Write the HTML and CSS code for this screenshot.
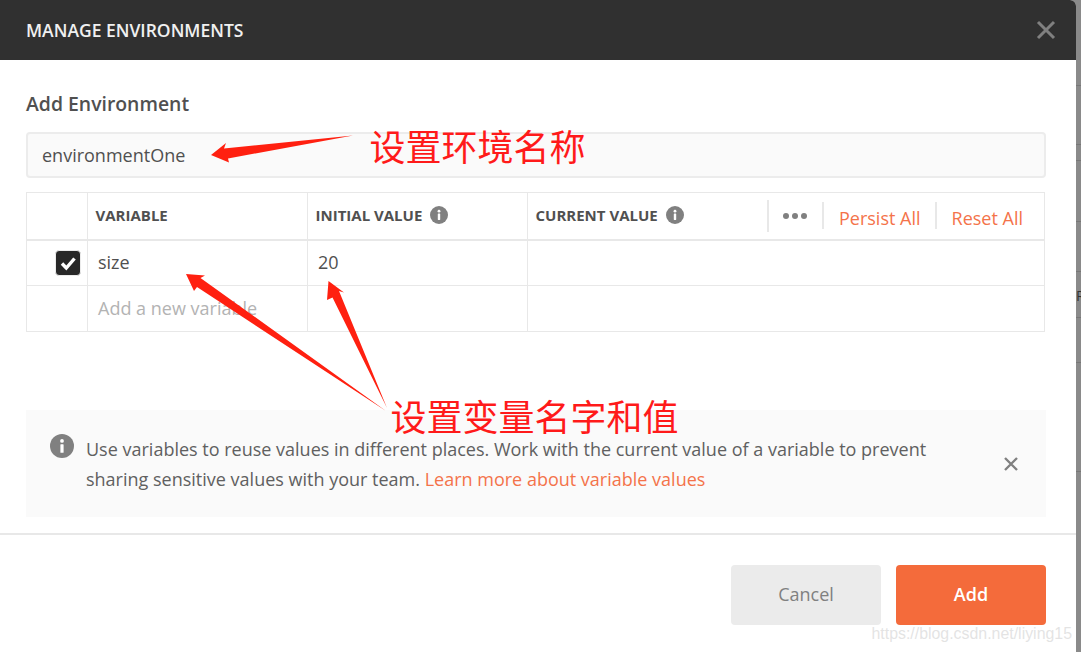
FILE: index.html
```html
<!DOCTYPE html>
<html lang="en">
<head>
    <meta charset="UTF-8">
    <meta name="viewport" content="width=device-width, initial-scale=1.0">
    <title>Manage Environments</title>
    <link rel="stylesheet" href="styles.css">
</head>

<body>
<section class="modal">
    <header class="modalHeader">
        <h1>MANAGE ENVIRONMENTS</h1>
        <svg class="closeIcon" viewBox="0 0 20 20" width="20" height="20"><path d="M2 2 L18 18 M18 2 L2 18"/></svg>
    </header>

    <div class="modalBody">
        <h2>Add Environment</h2>
        <input class="envName" type="text" value="environmentOne">

        <table class="varTable">
            <thead>
                <tr>
                    <th class="checkCol"></th>
                    <th class="varCol">VARIABLE</th>
                    <th class="valCol">
                        <span class="thLabel">INITIAL VALUE
                            <svg class="infoIcon" viewBox="0 0 18 18" width="18" height="18"><circle cx="9" cy="9" r="9"/><rect x="7.8" y="7.6" width="2.4" height="6.4" rx="0.4"/><circle class="dot" cx="9" cy="5.2" r="1.4"/></svg>
                        </span>
                    </th>
                    <th>
                        <div class="currentHead">
                            <span class="thLabel">CURRENT VALUE
                                <svg class="infoIcon" viewBox="0 0 18 18" width="18" height="18"><circle cx="9" cy="9" r="9"/><rect x="7.8" y="7.6" width="2.4" height="6.4" rx="0.4"/><circle class="dot" cx="9" cy="5.2" r="1.4"/></svg>
                            </span>
                            <div class="headActions">
                                <span class="moreDots"><i></i><i></i><i></i></span>
                                <a href="#">Persist All</a>
                                <a href="#">Reset All</a>
                            </div>
                        </div>
                    </th>
                </tr>
            </thead>
            <tbody>
                <tr>
                    <td class="checkCell">
                        <span class="checkbox">
                            <svg viewBox="0 0 24 24" width="24" height="24"><path d="M6 12.5 L10.3 17 L18.5 7.5"/></svg>
                        </span>
                    </td>
                    <td>size</td>
                    <td>20</td>
                    <td></td>
                </tr>
                <tr>
                    <td></td>
                    <td class="placeholder">Add a new variable</td>
                    <td></td>
                    <td></td>
                </tr>
            </tbody>
        </table>

        <div class="notice">
            <svg class="infoIcon big" viewBox="0 0 18 18" width="24" height="24"><circle cx="9" cy="9" r="9"/><rect x="7.8" y="7.6" width="2.4" height="6.4" rx="0.4"/><circle class="dot" cx="9" cy="5.2" r="1.4"/></svg>
            <p>Use variables to reuse values in different places. Work with the current value of a variable to prevent sharing sensitive values with your team. <a href="#">Learn more about variable values</a></p>
            <svg class="noticeClose" viewBox="0 0 14 14" width="14" height="14"><path d="M1 1 L13 13 M13 1 L1 13"/></svg>
        </div>
    </div>

    <footer class="modalFooter">
        <button class="btn cancel">Cancel</button>
        <button class="btn add">Add</button>
    </footer>
</section>

<aside class="behind">
    <span class="behindR">R</span>
</aside>

<!-- red notes drawn over the screenshot -->
<svg class="arrows" width="1081" height="652" viewBox="0 0 1081 652">
    <polygon points="211,155 226,143 224,148.5 353,135.5 228,158.5 229,162.5"/>
    <polygon points="186,274 205,275.5 200.5,278 386,411 197,287 194,291"/>
    <polygon points="328.5,281 344,292.5 339,291 387,408 332.5,297.5 327,300"/>
</svg>
<span class="note noteName">设置环境名称</span>
<span class="note noteVar">设置变量名字和值</span>
<span class="watermark">https://blog.csdn.net/liying15</span>
</body>
</html>
```

FILE: styles.css
```css
* {
    margin: 0;
    padding: 0;
    box-sizing: border-box;
}

body {
    display: flex;
    width: 1081px;
    height: 652px;
    overflow: hidden;
    background: #8a8a8a;
    font-family: 'Open Sans', sans-serif;
    font-size: 18px;
    color: #505050;
}

.modal {
    width: 1076px;
    height: 652px;
    flex-shrink: 0;
    display: flex;
    flex-direction: column;
    background: #fff;
    border-top-right-radius: 6px;
    overflow: hidden;
}

.modalHeader {
    height: 60px;
    display: flex;
    justify-content: space-between;
    align-items: center;
    padding: 0 20px 0 26px;
    background: #303030;
}

.modalHeader h1 {
    font-size: 17.5px;
    font-weight: 600;
    color: #f0f0f0;
}

.closeIcon path {
    stroke: #808080;
    stroke-width: 3;
    fill: none;
}

.modalBody {
    height: 473px;
    padding: 32px 30px 0 26px;
}

.modalBody h2 {
    font-size: 19.4px;
    line-height: 24px;
    font-weight: 600;
    color: #505050;
}

.envName {
    display: block;
    width: 1020px;
    height: 46px;
    margin-top: 16px;
    padding: 0 14px;
    background: #fafafa;
    border: 2px solid #ececec;
    border-radius: 4px;
    outline: none;
    font-family: 'Open Sans', sans-serif;
    font-size: 18px;
    color: #505050;
}

.varTable {
    width: 1019px;
    margin-top: 14px;
    table-layout: fixed;
    border-collapse: collapse;
}

.varTable th,
.varTable td {
    height: 46px;
    border: 1px solid #e8e8e8;
    padding: 0 10px 2px;
    text-align: left;
    vertical-align: middle;
}

.varTable thead tr {
    height: 47px;
}

.varTable th {
    height: 47px;
    border-bottom: 2px solid #e8e8e8;
    padding: 0 8px 2px 7.5px;
    font-size: 15px;
    font-weight: 700;
}

.checkCol {
    width: 61px;
}

.varCol,
.valCol {
    width: 220px;
}

.thLabel {
    display: inline-flex;
    align-items: center;
    gap: 8px;
}

.infoIcon {
    fill: #808080;
    flex-shrink: 0;
}

.infoIcon rect,
.infoIcon .dot {
    fill: #fff;
}

.currentHead {
    display: flex;
    justify-content: space-between;
    align-items: center;
}

.headActions {
    display: flex;
    align-items: center;
    margin-top: 2px;
    margin-right: 13px;
    font-weight: 400;
    font-size: 18px;
}

.headActions a {
    display: block;
    height: 27px;
    padding: 0 14px 0 15px;
    line-height: 32px;
    border-left: 2px solid #e8e8e8;
    color: #f4734a;
    text-decoration: none;
}

.headActions a:last-child {
    padding-right: 0;
}

.moreDots {
    display: flex;
    align-items: center;
    gap: 3px;
    height: 32px;
    padding: 0 15px 0 14px;
    border-left: 2px solid #e8e8e8;
}

.moreDots i {
    width: 6px;
    height: 6px;
    border-radius: 50%;
    background: #808080;
}

.varTable td.checkCell {
    padding: 0 6px 0 0;
    text-align: right;
}

.checkbox {
    display: inline-block;
    width: 26px;
    height: 26px;
    vertical-align: middle;
    background: #282828;
    border: 1px solid #ececec;
    border-radius: 4px;
}

.checkbox svg {
    display: block;
}

.checkbox path {
    stroke: #fff;
    stroke-width: 3.4;
    fill: none;
}

.placeholder {
    color: #b3b3b3;
}

.notice {
    display: flex;
    align-items: flex-start;
    width: 1020px;
    height: 107px;
    margin-top: 78px;
    padding: 24px 28px 0 24px;
    background: #fafafa;
}

.notice p {
    flex: 1;
    margin-left: 12px;
    padding-right: 60px;
    line-height: 30px;
    color: #606060;
}

.notice a {
    color: #f4734a;
    text-decoration: none;
}

.noticeClose {
    margin-top: 23px;
}

.noticeClose path {
    stroke: #808080;
    stroke-width: 2.4;
    fill: none;
}

.modalFooter {
    flex: 1;
    display: flex;
    justify-content: flex-end;
    gap: 15px;
    padding: 30px 30px 0 0;
    border-top: 2px solid #e8e8e8;
}

.btn {
    width: 150px;
    height: 60px;
    padding-bottom: 2px;
    border: none;
    border-radius: 4px;
    font-family: 'Open Sans', sans-serif;
    font-size: 18px;
}

.cancel {
    background: #ebebeb;
    color: #808080;
}

.add {
    background: #f46b3b;
    color: #fff;
    font-weight: 600;
}

.behind {
    position: relative;
    flex: 1;
    height: 652px;
    overflow: hidden;
    background:
        linear-gradient(#777, #777) 0 85px / 100% 1px no-repeat,
        linear-gradient(#777, #777) 0 144px / 100% 1px no-repeat,
        linear-gradient(#777, #777) 0 160px / 100% 1px no-repeat,
        linear-gradient(#777, #777) 0 221px / 100% 1px no-repeat,
        linear-gradient(#777, #777) 0 271px / 100% 1px no-repeat,
        linear-gradient(#777, #777) 0 317px / 100% 1px no-repeat,
        linear-gradient(#777, #777) 0 362px / 100% 1px no-repeat,
        linear-gradient(#777, #777) 0 471px / 100% 1px no-repeat,
        #8a8a8a;
}

.behindR {
    position: absolute;
    left: 0;
    top: 286px;
    font-size: 14px;
    color: #333;
}

.arrows {
    position: absolute;
    left: 0;
    top: 0;
    pointer-events: none;
}

.arrows polygon {
    fill: #ff2010;
}

.note {
    position: absolute;
    font-family: 'Noto Sans CJK SC', sans-serif;
    font-size: 36px;
    line-height: 44px;
    color: #ff1a1a;
}

.noteName {
    left: 369.5px;
    top: 123px;
}

.noteVar {
    left: 390.5px;
    top: 393px;
}

.watermark {
    position: absolute;
    right: 9px;
    top: 625px;
    font-family: 'Liberation Sans', sans-serif;
    font-size: 15.9px;
    color: rgba(200, 200, 200, 0.5);
}
```
